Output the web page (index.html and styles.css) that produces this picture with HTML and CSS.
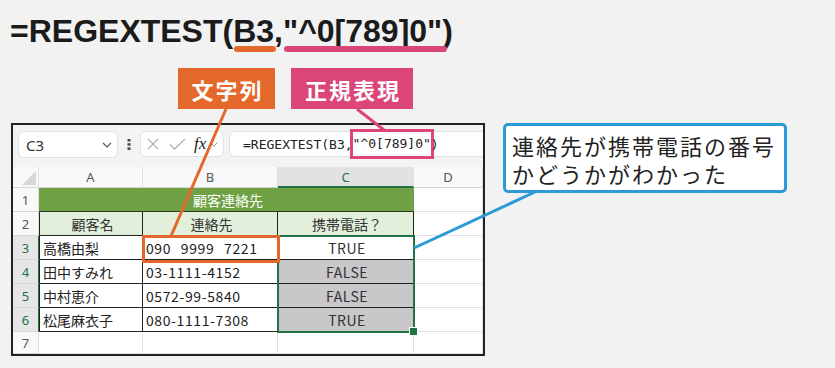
FILE: index.html
```html
<!DOCTYPE html>
<html>
<head>
  <meta charset="utf-8">
  <title>REGEXTEST</title>
  <link rel="stylesheet" href="styles.css">
</head>
<body>
  <div class="page">
    <h1 class="formula">=REGEXTEST(<span class="mark mark-ref">B3</span>,<span class="mark mark-re">"^0[789]0"</span>)</h1>

    <div class="tags">
      <span class="tag tag-ref">文字列</span>
      <span class="tag tag-re">正規表現</span>
    </div>

    <div class="stage">
      <div class="sheet">
        <!-- formula bar -->
        <div class="toolbar">
          <div class="namebox">
            <span>C3</span>
            <svg width="10" height="6" viewBox="0 0 10 6"><path d="M1 1l4 4 4-4" fill="none" stroke="#555" stroke-width="1.2"/></svg>
          </div>
          <div class="dots">
            <svg width="4" height="11" viewBox="0 0 4 11"><rect x="0.5" y="0" width="3" height="2.5" fill="#444"/><rect x="0.5" y="4.2" width="3" height="2.5" fill="#444"/><rect x="0.5" y="8.4" width="3" height="2.5" fill="#444"/></svg>
          </div>
          <div class="fxbox">
            <svg class="fx-x" width="12" height="12" viewBox="0 0 12 12"><path d="M1 1l10 10M11 1L1 11" stroke="#b4b4b4" stroke-width="1.3"/></svg>
            <svg class="fx-ok" width="17" height="12" viewBox="0 0 17 12"><path d="M1 6.5l4.5 4.5L16 1" fill="none" stroke="#b4b4b4" stroke-width="1.3"/></svg>
            <span class="fx">fx</span>
            <svg class="fx-more" width="8" height="5" viewBox="0 0 8 5"><path d="M0.5 0.5l3.5 3.5 3.5-3.5" fill="none" stroke="#999" stroke-width="1"/></svg>
          </div>
          <div class="input">=REGEXTEST(B3,<span class="hit">"^0[789]0"</span>)</div>
        </div>

        <!-- cells -->
        <div class="grid">
          <div class="hd corner"><svg width="14" height="14" viewBox="0 0 14 14"><path d="M14 0V14H0z" fill="#d8d8d8"/></svg></div>
          <div class="hd">A</div>
          <div class="hd">B</div>
          <div class="hd sel">C</div>
          <div class="hd">D</div>

          <div class="rh">1</div>
          <div class="cell title">顧客連絡先</div>
          <div class="cell"></div>

          <div class="rh">2</div>
          <div class="cell t th first">顧客名</div>
          <div class="cell t th">連絡先</div>
          <div class="cell t th">携帯電話？</div>
          <div class="cell"></div>

          <div class="rh sel">3</div>
          <div class="cell t first">高橋由梨</div>
          <div class="cell t num">090 9999 7221</div>
          <div class="cell t ctr">TRUE</div>
          <div class="cell"></div>

          <div class="rh sel">4</div>
          <div class="cell t first">田中すみれ</div>
          <div class="cell t num">03-1111-4152</div>
          <div class="cell t ctr dim">FALSE</div>
          <div class="cell"></div>

          <div class="rh sel">5</div>
          <div class="cell t first">中村恵介</div>
          <div class="cell t num">0572-99-5840</div>
          <div class="cell t ctr dim">FALSE</div>
          <div class="cell"></div>

          <div class="rh sel">6</div>
          <div class="cell t first">松尾麻衣子</div>
          <div class="cell t num">080-1111-7308</div>
          <div class="cell t ctr dim">TRUE</div>
          <div class="cell"></div>

          <div class="rh">7</div>
          <div class="cell"></div>
          <div class="cell"></div>
          <div class="cell"></div>
          <div class="cell"></div>

          <div class="range"></div>
          <div class="focus"></div>
        </div>
      </div>

      <div class="callout">
        <div class="line">連絡先が携帯電話の番号</div>
        <div class="line">かどうかがわかった</div>
      </div>
    </div>

    <svg class="leaders" width="835" height="368" viewBox="0 0 835 368">
      <line x1="226" y1="109" x2="171" y2="236" stroke="#e4682a" stroke-width="3"/>
      <line x1="357" y1="109" x2="384" y2="130" stroke="#dc4579" stroke-width="3"/>
      <line x1="535" y1="192" x2="414" y2="248" stroke="#2b9ad6" stroke-width="3"/>
    </svg>
  </div>
</body>
</html>
```

FILE: styles.css
```css
* {box-sizing:border-box;}
body {margin:0; background:#f2f2f2;}

.page {position:relative; width:835px; height:368px; padding:15px 0 0 11px; overflow:hidden; font-family:"Noto Sans CJK JP", sans-serif; color:#222;}

/* headline formula */
.formula {margin:0 0 0 -1px; font:bold 32px/32px "Liberation Sans", Arial, sans-serif; color:#1b1b1b; white-space:nowrap;}
.mark {position:relative;}
.mark::after {content:""; position:absolute; top:33px; height:6px; border-radius:3px;}
.mark-ref::after {left:1px; right:-2px; background:#e4682a;}
.mark-re::after {left:1px; right:-5px; background:#dc4579;}

/* labels */
.tags {display:flex; gap:16px; margin:21px 0 0 167px;}
.tag {display:flex; align-items:center; justify-content:center; height:41px; padding-left:2px; color:#fff; font-weight:bold; font-size:22px; letter-spacing:2px;}
.tag-ref {width:97px; background:#e4682a;}
.tag-re {width:122px; background:#dc4579;}

.stage {display:flex; align-items:flex-start; gap:18px; margin-top:14px;}

/* excel panel */
.sheet {width:474px; height:233px; border:2px solid #222; background:#f3f3f3; overflow:hidden;}
.toolbar {display:flex; align-items:flex-start; height:42px; padding:6px 0 0 5px;}
.namebox {display:flex; align-items:center; justify-content:space-between; width:100px; height:27px; padding:0 5px 0 7px; background:#fff; border:1px solid #e2e2e2; border-radius:6px; font:15px "Noto Sans", sans-serif; color:#333;}
.dots {display:flex; justify-content:center; width:22px; padding-top:8px;}
.fxbox {display:flex; align-items:center; width:84px; height:26px; padding-left:6px; background:#fff; border:1px solid #e2e2e2; border-radius:6px;}
.fx-ok {margin-left:10px;}
.fx {margin-left:8px; font:italic 17px "Liberation Serif", serif; color:#222;}
.fx-more {margin-left:4px;}
.input {display:flex; align-items:center; flex:1; height:26px; margin-left:5px; padding-left:13px; background:#fff; border:1px solid #e2e2e2; border-right:0; border-radius:6px 0 0 6px; font:13px "DejaVu Sans Mono", monospace; color:#222; white-space:pre;}
.hit {display:inline-block; line-height:24px; outline:3px solid #dc4579;}

.grid {position:relative; display:grid; grid-template-columns:26px 104px 135px 136px 1fr; grid-template-rows:21px repeat(6, 24px) 22px; background:#fff; font-size:14px;}
.hd, .rh {display:flex; align-items:center; justify-content:center; background:#f9f9f9; border-right:1px solid #e0e0e0; border-bottom:1px solid #d6d6d6; font:13px "Noto Sans", sans-serif; color:#555;}
.corner {align-items:flex-end; justify-content:flex-end; padding:0 2px 2px 0;}
.hd.sel {background:#e2e2e2; border-bottom:2px solid #217346; color:#217346;}
.rh.sel {background:#e6e6e6; border-right:1px solid #217346; color:#217346;}
.cell {display:flex; align-items:center; padding-left:3px; border-right:1px solid #e1e1e1; border-bottom:1px solid #e1e1e1; white-space:nowrap;}
.cell.t {border-color:#222;}
.cell.first {border-left:1px solid #222;}
.num {letter-spacing:0.6px; word-spacing:6px;}
.title {grid-column:span 3; justify-content:center; background:#70a245; border-bottom:1px solid #2a3a22; border-right:0; color:#fff;}
.th {justify-content:center; background:#e2efda; color:#333;}
.ctr {justify-content:center; color:#333; letter-spacing:0.5px;}
.dim {background:#c9c7c9;}

.range {position:absolute; grid-column:4 / 5; grid-row:4 / 8; top:-1px; left:-1px; right:-1px; bottom:-1px; border:2px solid #217346;}
.range::after {content:""; position:absolute; right:-5px; bottom:-5px; width:7px; height:7px; background:#217346; border:1px solid #fff;}
.focus {position:absolute; grid-column:3 / 4; grid-row:4 / 5; top:-1px; left:-1px; right:-2px; bottom:-3px; border:3px solid #e4682a;}

/* note */
.callout {width:284px; height:70px; padding:5px 0 0 6px; background:#fff; border:3px solid #2b9ad6; border-radius:5px; font-size:22px; letter-spacing:2px; color:#222;}
.line {height:28px; line-height:28px;}

.leaders {position:absolute; top:0; left:0; pointer-events:none;}
```
